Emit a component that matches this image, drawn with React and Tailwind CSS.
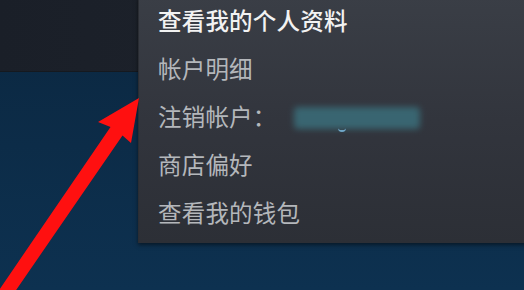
import React from "react";

const items = [
  { label: "查看我的个人资料", active: true },
  { label: "帐户明细" },
  { label: "注销帐户：", blur: true },
  { label: "商店偏好" },
  { label: "查看我的钱包" },
];

export default function App() {
  return (
    <div
      className="relative w-[524px] h-[290px] overflow-hidden bg-gradient-to-b from-[#0b2740] to-[#0d3150]"
      style={{ fontFamily: '"Noto Sans CJK SC", "Noto Sans", sans-serif' }}
    >
      <div className="h-[72px] w-full bg-gradient-to-r from-[#1a1f28] to-[#20252e] border-b border-[#15191f]" />

      <div className="absolute left-[138px] top-[-3px] w-[390px] h-[246px] bg-gradient-to-b from-[#3a3e46] via-[#32353d] to-[#2c2f36] shadow-[0_2px_4px_rgba(0,0,0,0.5)] border-l border-[#2a2d33]">
        <div className="flex flex-col pl-[19px]">
          {items.map((it) => (
            <div
              key={it.label}
              className={`h-[48px] flex items-center text-[23.5px] tracking-[0.2px] ${
                it.active ? "text-[#f2f2f2] font-medium" : "text-[#b4b7bb]"
              }`}
            >
              <span>{it.label}</span>
              {it.blur && (
                <span className="relative ml-[17px] mt-[1px] w-[126px] h-[22px]">
                  <span className="absolute inset-0 bg-[#3a6b77] blur-[3px] rounded-sm opacity-90" />
                  <span className="absolute left-[44px] top-[21px] w-[8px] h-[4px] border-b-2 border-[#6fa6c8] rounded-b-full" />
                </span>
              )}
            </div>
          ))}
        </div>
      </div>

      <svg className="absolute left-0 top-0" width="524" height="290" viewBox="0 0 524 290">
        <polygon
          points="139,98 131,143 122.5,135.5 6.5,304 -5,296 110.5,127 98,122"
          fill="#ff1010"
        />
      </svg>
    </div>
  );
}
